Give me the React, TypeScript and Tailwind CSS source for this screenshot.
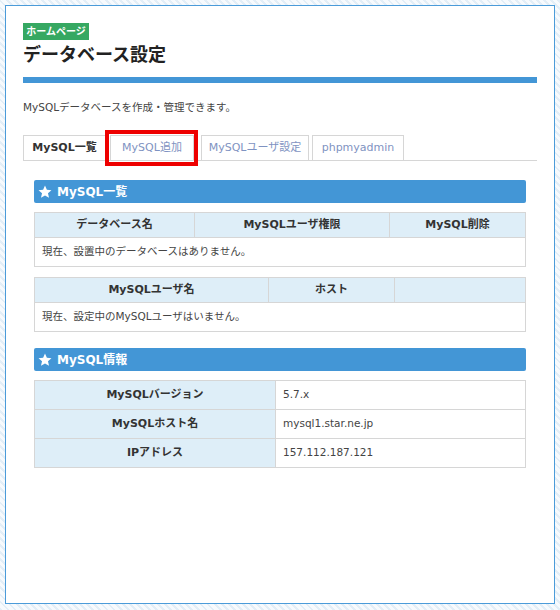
import React from "react";

const font = {
  fontFamily: '"DejaVu Sans", "Noto Sans CJK JP", sans-serif',
};

function Star() {
  return (
    <svg width="14" height="14" viewBox="0 0 24 24" className="shrink-0">
      <path
        fill="#fff"
        d="M12 1l3.2 7.3 7.9.7-6 5.3 1.8 7.7L12 18l-6.9 4 1.8-7.7-6-5.3 7.9-.7z"
      />
    </svg>
  );
}

function SectionHeader({ title }: { title: string }) {
  return (
    <div className="flex h-[23px] items-center gap-[5px] rounded-[2px] bg-[#4396d6] pl-[4px] text-[12px] font-bold text-white">
      <Star />
      <span>{title}</span>
    </div>
  );
}

const th =
  "border border-[#d6d6d6] bg-[#deeef8] h-[25px] text-center text-[11px] font-bold text-[#333] p-0";
const td = "border border-[#d6d6d6] h-[29px] px-[7px] text-[10.5px] text-[#444]";

export default function App() {
  return (
    <div
      style={font}
      className="min-h-[610px] w-[560px] bg-[repeating-linear-gradient(45deg,#e3eef7_0px,#e3eef7_2px,#f7fafd_2px,#f7fafd_5px)] p-[5px]"
    >
      <div className="h-[599px] border border-[#4b9bd9] bg-white px-[17px] pt-[17px]">
        <div className="flex h-[17px] w-[66px] items-center justify-center bg-[#36a862] text-[10px] font-bold text-white">
          ホームページ
        </div>
        <h1 className="mt-[3px] text-[18px] font-bold leading-[24px] text-[#222]">
          データベース設定
        </h1>
        <div className="mt-[10px] h-[6px] bg-[#4396d6]" />
        <p className="mt-[17px] text-[10.5px] leading-[14px] text-[#444]">
          MySQLデータベースを作成・管理できます。
        </p>

        {/* tabs */}
        <div className="relative mt-[21px] flex h-[26px] border-b border-[#d6d6d6]">
          <div className="flex w-[83px] items-center justify-center border border-b-0 border-[#d6d6d6] bg-white text-[11px] font-bold text-[#333]">
            MySQL一覧
          </div>
          <div className="ml-[4px] flex w-[84px] items-center justify-center border border-b-0 border-[#d6d6d6] bg-white text-[11px] text-[#7f93c2]">
            MySQL追加
          </div>
          <div className="ml-[7px] flex w-[108px] items-center justify-center border border-b-0 border-[#d6d6d6] bg-white text-[11px] text-[#7f93c2]">
            MySQLユーザ設定
          </div>
          <div className="ml-[3px] flex w-[92px] items-center justify-center border border-b-0 border-[#d6d6d6] bg-white text-[11px] text-[#7f93c2]">
            phpmyadmin
          </div>
          <div className="pointer-events-none absolute left-[82px] top-[-5px] h-[36px] w-[93px] border-[4px] border-[#ee0000]" />
        </div>

        <div className="mx-[11px] mt-[19px]">
          <SectionHeader title="MySQL一覧" />
          <table className="mt-[9px] w-full border-collapse">
            <thead>
              <tr>
                <th className={th + " w-[160px]"}>データベース名</th>
                <th className={th + " w-[195px]"}>MySQLユーザ権限</th>
                <th className={th}>MySQL削除</th>
              </tr>
            </thead>
            <tbody>
              <tr>
                <td className={td} colSpan={3}>
                  現在、設置中のデータベースはありません。
                </td>
              </tr>
            </tbody>
          </table>

          <table className="mt-[10px] w-full border-collapse">
            <thead>
              <tr>
                <th className={th + " w-[234px]"}>MySQLユーザ名</th>
                <th className={th + " w-[126px]"}>ホスト</th>
                <th className={th}></th>
              </tr>
            </thead>
            <tbody>
              <tr>
                <td className={td} colSpan={3}>
                  現在、設定中のMySQLユーザはいません。
                </td>
              </tr>
            </tbody>
          </table>

          <div className="mt-[16px]">
            <SectionHeader title="MySQL情報" />
          </div>
          <table className="mt-[9px] w-full border-collapse">
            <tbody>
              {[
                ["MySQLバージョン", "5.7.x"],
                ["MySQLホスト名", "mysql1.star.ne.jp"],
                ["IPアドレス", "157.112.187.121"],
              ].map(([k, v]) => (
                <tr key={k}>
                  <th className={th + " h-[29px] w-[241px]"}>{k}</th>
                  <td className={td + " text-[#333]"}>{v}</td>
                </tr>
              ))}
            </tbody>
          </table>
        </div>
      </div>
    </div>
  );
}
